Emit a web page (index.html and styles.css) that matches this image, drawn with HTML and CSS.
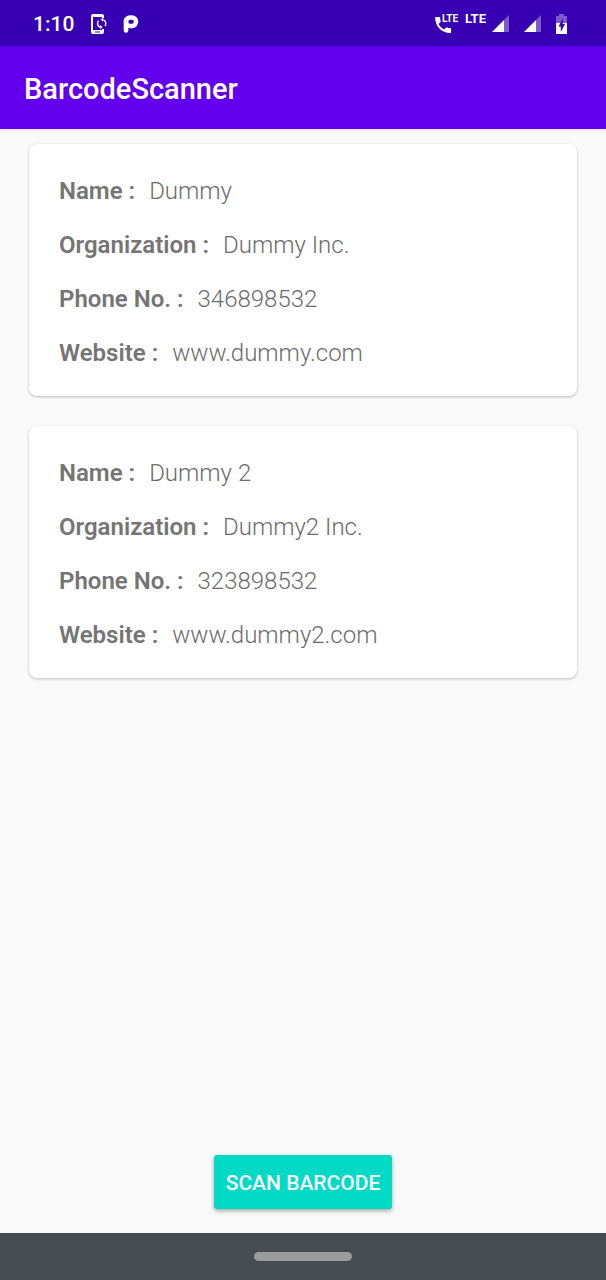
FILE: index.html
```html
<!DOCTYPE html>
<html lang="en">
<head>
<meta charset="utf-8">
<meta name="viewport" content="width=device-width, initial-scale=1">
<title>BarcodeScanner</title>
<link rel="stylesheet" href="styles.css">
</head>
<body>
<div class="screen">
  <div class="status-bar">
    <div class="status-left">
      <time class="clock">1:10</time>
      <svg class="icon-sync" viewBox="0 0 16 20" width="16" height="20" aria-hidden="true">
        <path fill="#fff" fill-rule="evenodd" d="M2 0h9a2 2 0 0 1 2 2v2h-2V3H2v13h9v-1h2v3a2 2 0 0 1-2 2H2a2 2 0 0 1-2-2V2a2 2 0 0 1 2-2zM4 17.500v1h5v-1z"/>
        <path fill="none" stroke="#fff" stroke-width="1.400" d="M9 13.200A4.200 4.200 0 0 1 7.500 6.600M12 5.600A4.200 4.200 0 0 1 14 12"/>
        <path fill="#fff" d="M12 3.500v4.200L9.500 5.600zM9 11v4.200l2.600-2.100z"/>
      </svg>
      <svg class="icon-p" viewBox="0 0 16 18" width="16" height="18" aria-hidden="true">
        <rect x="3" y="2.500" width="10" height="8.500" rx="4" fill="none" stroke="#fff" stroke-width="4.400"/>
        <path d="M3 5v10.500" stroke="#fff" stroke-width="4.600" stroke-linecap="round"/>
      </svg>
    </div>
    <div class="status-right">
      <svg class="icon-call" viewBox="0 0 24 20" width="24" height="20" aria-hidden="true">
        <path fill="#fff" d="M1 3h3.200q.8 0 .9.800.1 1.700.6 3.300.2.600-.3 1.100L3.500 10.100q1.900 3.700 5.500 5.500l1.900-1.900q.5-.5 1.100-.3 1.600.5 3.300.6.800.1.800.9V18q0 .9-.9.900C6.600 18.900.2 12.200.2 3.900Q.2 3 1 3z"/>
        <text x="7" y="8" class="call-text">LTE</text>
      </svg>
      <span class="network">LTE</span>
      <svg class="icon-signal" viewBox="0 0 17 17" width="17" height="17" aria-hidden="true">
        <path fill="#fff" fill-opacity=".35" d="M17 0v17H0z"/><path fill="#fff" d="M12 5v12H0z"/>
      </svg>
      <svg class="icon-signal" viewBox="0 0 17 17" width="17" height="17" aria-hidden="true">
        <path fill="#fff" fill-opacity=".35" d="M17 0v17H0z"/><path fill="#fff" d="M12 5v12H0z"/>
      </svg>
      <svg class="icon-battery" viewBox="0 0 11 20" width="11" height="20" aria-hidden="true">
        <path fill="#fff" fill-opacity=".35" d="M3 0h5v2h3v7H0V2h3z"/>
        <path fill="#fff" d="M0 9h11v11H0z"/>
        <path fill="#3700b3" d="M6.800 4.500 2.500 12.500h2.300v5.500l4.200-8H6.800z"/>
      </svg>
    </div>
  </div>
  <header class="app-bar"><h1 class="title">BarcodeScanner</h1></header>
  <main class="content">
    <dl class="card">
      <div class="row"><dt>Name :</dt><dd>Dummy</dd></div>
      <div class="row"><dt>Organization :</dt><dd>Dummy Inc.</dd></div>
      <div class="row"><dt>Phone No. :</dt><dd>346898532</dd></div>
      <div class="row"><dt>Website :</dt><dd>www.dummy.com</dd></div>
    </dl>
    <dl class="card">
      <div class="row"><dt>Name :</dt><dd>Dummy 2</dd></div>
      <div class="row"><dt>Organization :</dt><dd>Dummy2 Inc.</dd></div>
      <div class="row"><dt>Phone No. :</dt><dd>323898532</dd></div>
      <div class="row"><dt>Website :</dt><dd>www.dummy2.com</dd></div>
    </dl>
    <button class="scan" type="button">SCAN BARCODE</button>
  </main>
  <div class="nav-bar"><div class="nav-pill"></div></div>
</div>
</body>
</html>
```
FILE: styles.css
```css
* {
  box-sizing: border-box;
}

body {
  margin: 0;
  background: #fafafa;
  font-family: Roboto, "Liberation Sans", sans-serif;
}

.screen {
  display: flex;
  flex-direction: column;
  min-height: 100vh;
}

.status-bar {
  display: flex;
  justify-content: space-between;
  align-items: center;
  height: 46px;
  padding: 1px 39px 0 33px;
  background: #3700b3;
  color: #fff;
}

.status-left,
.status-right {
  display: flex;
  align-items: center;
}

.clock {
  font-size: 21px;
  font-weight: 500;
  line-height: 24px;
}

.icon-sync {
  margin-left: 17px;
}

.icon-p {
  margin-left: 16px;
}

.call-text {
  fill: #fff;
  font-size: 10px;
  font-weight: 700;
}

.network {
  margin: 0 6px 10px;
  font-size: 13px;
  font-weight: 700;
  line-height: 14px;
}

.icon-signal {
  margin-right: 15px;
}

.app-bar {
  display: flex;
  align-items: center;
  height: 83px;
  padding: 2px 24px 0;
  background: #6200ee;
  box-shadow: 0 1px 4px rgba(98, 0, 238, 0.15);
}

.title {
  margin: 0;
  color: #fff;
  font-size: 29px;
  font-weight: 500;
  line-height: 36px;
}

.content {
  display: flex;
  flex: 1;
  flex-direction: column;
  gap: 30px;
  padding: 15px 29px 24px;
}

.card {
  display: flex;
  flex-direction: column;
  gap: 24px;
  margin: 0;
  padding: 32px 30px 28px;
  border-radius: 8px;
  background: #fff;
  box-shadow: 0 1px 3px rgba(0, 0, 0, 0.26);
  color: #757575;
  font-size: 24px;
  line-height: 30px;
}

.row {
  display: flex;
  gap: 14px;
}

dt {
  font-weight: 600;
}

dd {
  margin: 0;
  color: #6c6c6c;
  font-weight: 300;
}

.scan {
  align-self: center;
  height: 54px;
  margin-top: auto;
  padding: 2px 12px 0;
  border: 0;
  border-radius: 3px;
  background: #03dac5;
  box-shadow: 0 2px 4px rgba(0, 0, 0, 0.35);
  color: #fff;
  font-family: inherit;
  font-size: 21px;
  font-weight: 500;
}

.nav-bar {
  display: flex;
  align-items: center;
  justify-content: center;
  height: 47px;
  background: #454c52;
}

.nav-pill {
  width: 98px;
  height: 9px;
  border-radius: 5px;
  background: #999c9b;
}
```
